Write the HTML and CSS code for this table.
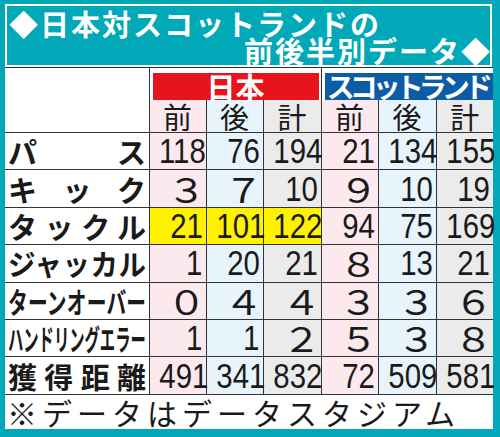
FILE: index.html
```html
<!DOCTYPE html>
<html lang="ja">
    <head>
        <meta charset="UTF-8">
        <meta name="viewport" content="width=device-width, initial-scale=1.0">
        <title>日本対スコットランドの前後半別データ</title>
        <link rel="stylesheet" href="styles.css">
    </head>
    <body>
        <div class="frame">
            <div class="title">
                <div class="line1">◆日本対スコットランドの</div>
                <div class="line2">前後半別データ◆</div>
            </div>
            <table class="stats">
                <colgroup>
                    <col class="col-label">
                    <col class="col-num">
                    <col class="col-num">
                    <col class="col-wide">
                    <col class="col-num">
                    <col class="col-wide">
                    <col class="col-num">
                </colgroup>
                <tr class="team">
                    <th rowspan="2" class="blank"></th>
                    <th colspan="3" class="team-cell"><div class="badge japan">日本</div></th>
                    <th colspan="3" class="team-cell last"><div class="badge scotland">スコットランド</div></th>
                </tr>
                <tr class="half">
                    <th class="first">前</th>
                    <th class="second">後</th>
                    <th class="total">計</th>
                    <th class="first">前</th>
                    <th class="second">後</th>
                    <th class="total">計</th>
                </tr>
                <tr class="row">
                    <td class="label"><span class="lab">パス</span></td>
                    <td class="first jp"><span class="n">118</span></td>
                    <td class="second jp"><span class="n">76</span></td>
                    <td class="total jp"><span class="n">194</span></td>
                    <td class="first"><span class="n">21</span></td>
                    <td class="second"><span class="n">134</span></td>
                    <td class="total"><span class="n">155</span></td>
                </tr>
                <tr class="row">
                    <td class="label"><span class="lab">キック</span></td>
                    <td class="first jp"><span class="z">３</span></td>
                    <td class="second jp"><span class="z">７</span></td>
                    <td class="total jp"><span class="n">10</span></td>
                    <td class="first"><span class="z">９</span></td>
                    <td class="second"><span class="n">10</span></td>
                    <td class="total"><span class="n">19</span></td>
                </tr>
                <tr class="row hot">
                    <td class="label"><span class="lab">タックル</span></td>
                    <td class="first jp"><span class="n">21</span></td>
                    <td class="second jp"><span class="n">101</span></td>
                    <td class="total jp"><span class="n">122</span></td>
                    <td class="first"><span class="n">94</span></td>
                    <td class="second"><span class="n">75</span></td>
                    <td class="total"><span class="n">169</span></td>
                </tr>
                <tr class="row">
                    <td class="label"><span class="lab sq5">ジャッカル</span></td>
                    <td class="first jp"><span class="n">1</span></td>
                    <td class="second jp"><span class="n">20</span></td>
                    <td class="total jp"><span class="n">21</span></td>
                    <td class="first"><span class="z">８</span></td>
                    <td class="second"><span class="n">13</span></td>
                    <td class="total"><span class="n">21</span></td>
                </tr>
                <tr class="row">
                    <td class="label"><span class="lab sq7">ターンオーバー</span></td>
                    <td class="first jp"><span class="z">０</span></td>
                    <td class="second jp"><span class="z">４</span></td>
                    <td class="total jp"><span class="z">４</span></td>
                    <td class="first"><span class="z">３</span></td>
                    <td class="second"><span class="z">３</span></td>
                    <td class="total"><span class="z">６</span></td>
                </tr>
                <tr class="row">
                    <td class="label"><span class="lab sq9">ハンドリングエラー</span></td>
                    <td class="first jp"><span class="n">1</span></td>
                    <td class="second jp"><span class="n">1</span></td>
                    <td class="total jp"><span class="z">２</span></td>
                    <td class="first"><span class="z">５</span></td>
                    <td class="second"><span class="z">３</span></td>
                    <td class="total"><span class="z">８</span></td>
                </tr>
                <tr class="row">
                    <td class="label"><span class="lab">獲得距離</span></td>
                    <td class="first jp"><span class="n">491</span></td>
                    <td class="second jp"><span class="n">341</span></td>
                    <td class="total jp"><span class="n">832</span></td>
                    <td class="first"><span class="n">72</span></td>
                    <td class="second"><span class="n">509</span></td>
                    <td class="total"><span class="n">581</span></td>
                </tr>
                <tr class="note">
                    <td colspan="7">※データはデータスタジアム</td>
                </tr>
            </table>
        </div>
    </body>
</html>
```

FILE: styles.css
```css
body {
    margin: 0;
    font-family: "Noto Sans CJK JP", "Noto Sans", sans-serif;
    color: #1a1a1a;
}

.frame {
    width: 500px;
    height: 437px;
    box-sizing: border-box;
    padding: 4px 7px 7px 5px;
    background: #00a8b8;
    overflow: hidden;
}

.title {
    height: 63px;
    box-sizing: border-box;
    margin-right: 1px;
    padding: 4px 0 0 2px;
    border: 2px solid #fff;
    color: #fff;
    font-size: 29px;
    font-weight: 700;
    line-height: 27px;
    letter-spacing: 2px;
    white-space: nowrap;
}

.title .line2 {
    text-align: right;
    margin-right: -2px;
}

.stats {
    width: 488px;
    border-collapse: collapse;
    table-layout: fixed;
    background: #fff;
    border-top: 1px solid #333;
}

.col-label {
    width: 144px;
}

.col-num {
    width: 57px;
}

.col-wide {
    width: 58px;
}

.stats th,
.stats td {
    padding: 0;
    white-space: nowrap;
    overflow: visible;
}

/* team header row */
.team {
    height: 32px;
}

.blank {
    border-right: 1px solid #333;
    background: #fff;
}

.team-cell {
    padding: 3px 2px 0 3px !important;
    border-right: 1px solid #333;
    vertical-align: bottom;
}

.team-cell.last {
    padding-right: 0 !important;
    border-right: none;
}

.badge {
    height: 27px;
    color: #fff;
    font-size: 29px;
    font-weight: 700;
    line-height: 27px;
    text-align: center;
}

.badge.japan {
    background: #e8141c;
}

.badge.scotland {
    background: #0c5da6;
    font-size: 28px;
    letter-spacing: -5px;
    text-indent: -3px;
}

/* half header row */
.half {
    height: 33px;
}

.half th {
    font-size: 29px;
    font-weight: 400;
    line-height: 30px;
    text-align: center;
    border-left: 1px solid #333;
}

/* column tints */
.first {
    background: #fce9ed;
}

.second {
    background: #e7f4fb;
}

.total {
    background: #ebebeb;
}

/* data rows */
.row {
    height: 37.4px;
}

.stats td {
    border-top: 1px solid #333;
    border-left: 1px solid #333;
    text-align: right;
    padding-right: 3px;
    line-height: 30px;
    vertical-align: middle;
}

.stats td.label {
    border-left: none;
    padding: 0 0 0 3px;
    text-align: left;
    background: #fff;
}

.hot .label,
.hot .jp {
    background: #fff200;
}

.lab {
    display: inline-block;
    width: 138px;
    font-size: 29px;
    font-weight: 700;
    line-height: 30px;
    text-align: justify;
    text-align-last: justify;
    transform-origin: left center;
    vertical-align: top;
}

.lab.sq5 {
    width: 146px;
    transform: scaleX(0.945);
}

.lab.sq7 {
    width: 203px;
    transform: scaleX(0.68);
}

.lab.sq9 {
    width: 261px;
    transform: scaleX(0.528);
}

.n {
    display: inline-block;
    font-family: "Liberation Sans", Arial, sans-serif;
    font-size: 35px;
    line-height: 30px;
    transform: scaleX(0.84);
    transform-origin: right center;
    vertical-align: top;
}

.z {
    display: inline-block;
    font-size: 34px;
    line-height: 30px;
    margin-right: -3px;
    transform: scaleX(1.15);
    transform-origin: right center;
    vertical-align: top;
}

/* footer note */
.note td {
    height: 34px;
    padding: 0 0 0 2px;
    background: #fff;
    border-left: none;
    text-align: left;
    font-size: 30px;
    letter-spacing: 5px;
    line-height: 34px;
}
```
